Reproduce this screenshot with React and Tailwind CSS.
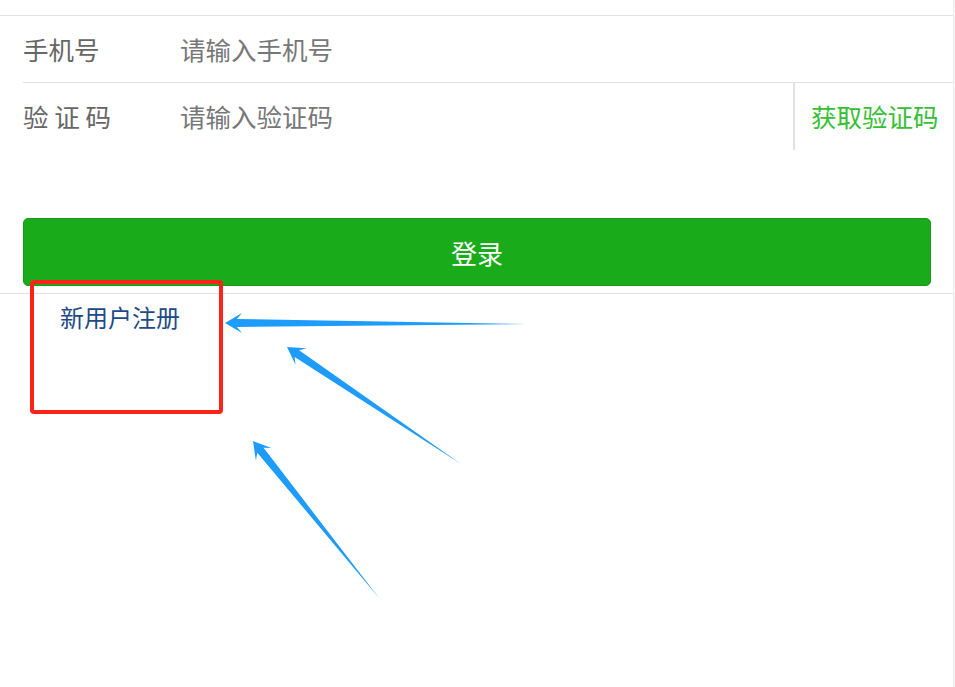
import React from "react";

const FONT = '"Microsoft YaHei", "Noto Sans CJK SC", "Noto Sans", sans-serif';

// tapered hand-drawn style arrow, tip -> tail
const arrowPoints = (tip, tail, headLen = 17, headW = 10, shaftW = 4) => {
  const dx = tail[0] - tip[0];
  const dy = tail[1] - tip[1];
  const len = Math.hypot(dx, dy);
  const ux = dx / len;
  const uy = dy / len;
  const px = -uy;
  const py = ux;
  const at = (d, w) => [tip[0] + ux * d + px * w, tip[1] + uy * d + py * w];
  const pts = [
    tip,
    at(headLen, headW),
    at(headLen * 0.7, shaftW),
    tail,
    at(headLen * 0.7, -shaftW),
    at(headLen, -headW),
  ];
  return pts.map((p) => p.join(",")).join(" ");
};

const arrows = [
  { tip: [225, 323], tail: [527, 324] },
  { tip: [287, 347], tail: [461, 464] },
  { tip: [253, 441], tail: [379, 598] },
];

const Field = ({ label, placeholder, children, last }) => (
  <div className="flex pl-[23px]">
    <div
      className={`flex h-[67px] flex-1 items-center ${
        last ? "" : "border-b border-[#e2e2e2]"
      }`}
    >
      <span className="w-[157px] shrink-0 text-[25.5px] text-[#666666]">{label}</span>
      <input
        className="min-w-0 flex-1 bg-transparent text-[25.5px] text-[#333] outline-none placeholder:text-[#777777]"
        placeholder={placeholder}
      />
      {children}
    </div>
  </div>
);

export default function App() {
  return (
    <div className="relative flex h-[687px] w-[955px] bg-white" style={{ fontFamily: FONT }}>
      <div className="w-[953px]">
        <div className="h-[15px]" />
        <div className="border-t border-[#e2e2e2]">
          <Field label="手机号" placeholder="请输入手机号" />
          <Field label="验 证 码" placeholder="请输入验证码" last>
            <button className="flex h-full w-[160px] items-center border-l-2 border-[#e2e2e2] pl-[16px] text-[25.5px] text-[#35c033]">
              获取验证码
            </button>
          </Field>
        </div>

        <div className="mt-[68px] px-[23px] pr-[22px]">
          <button className="flex h-[68px] w-full items-center justify-center rounded-[5px] border border-[#17991a] bg-[#1aab1b] text-[26px] text-white">
            登录
          </button>
        </div>

        <div className="mt-[7px] border-t border-[#e2e2e2] pl-[60px] pt-[6px]">
          <a className="text-[24px] leading-[34px] text-[#1b4a87]">新用户注册</a>
        </div>
      </div>
      <div className="w-[2px] border-l border-[#ececec] bg-[#fafafa]" />

      {/* annotations */}
      <div className="pointer-events-none absolute left-[30px] top-[280px] h-[134px] w-[193px] rounded-[4px] border-4 border-[#ff2216]" />
      <svg className="pointer-events-none absolute left-0 top-0" width="955" height="687">
        {arrows.map((a, i) => (
          <polygon key={i} points={arrowPoints(a.tip, a.tail)} fill="#1e9cfb" />
        ))}
      </svg>
    </div>
  );
}
